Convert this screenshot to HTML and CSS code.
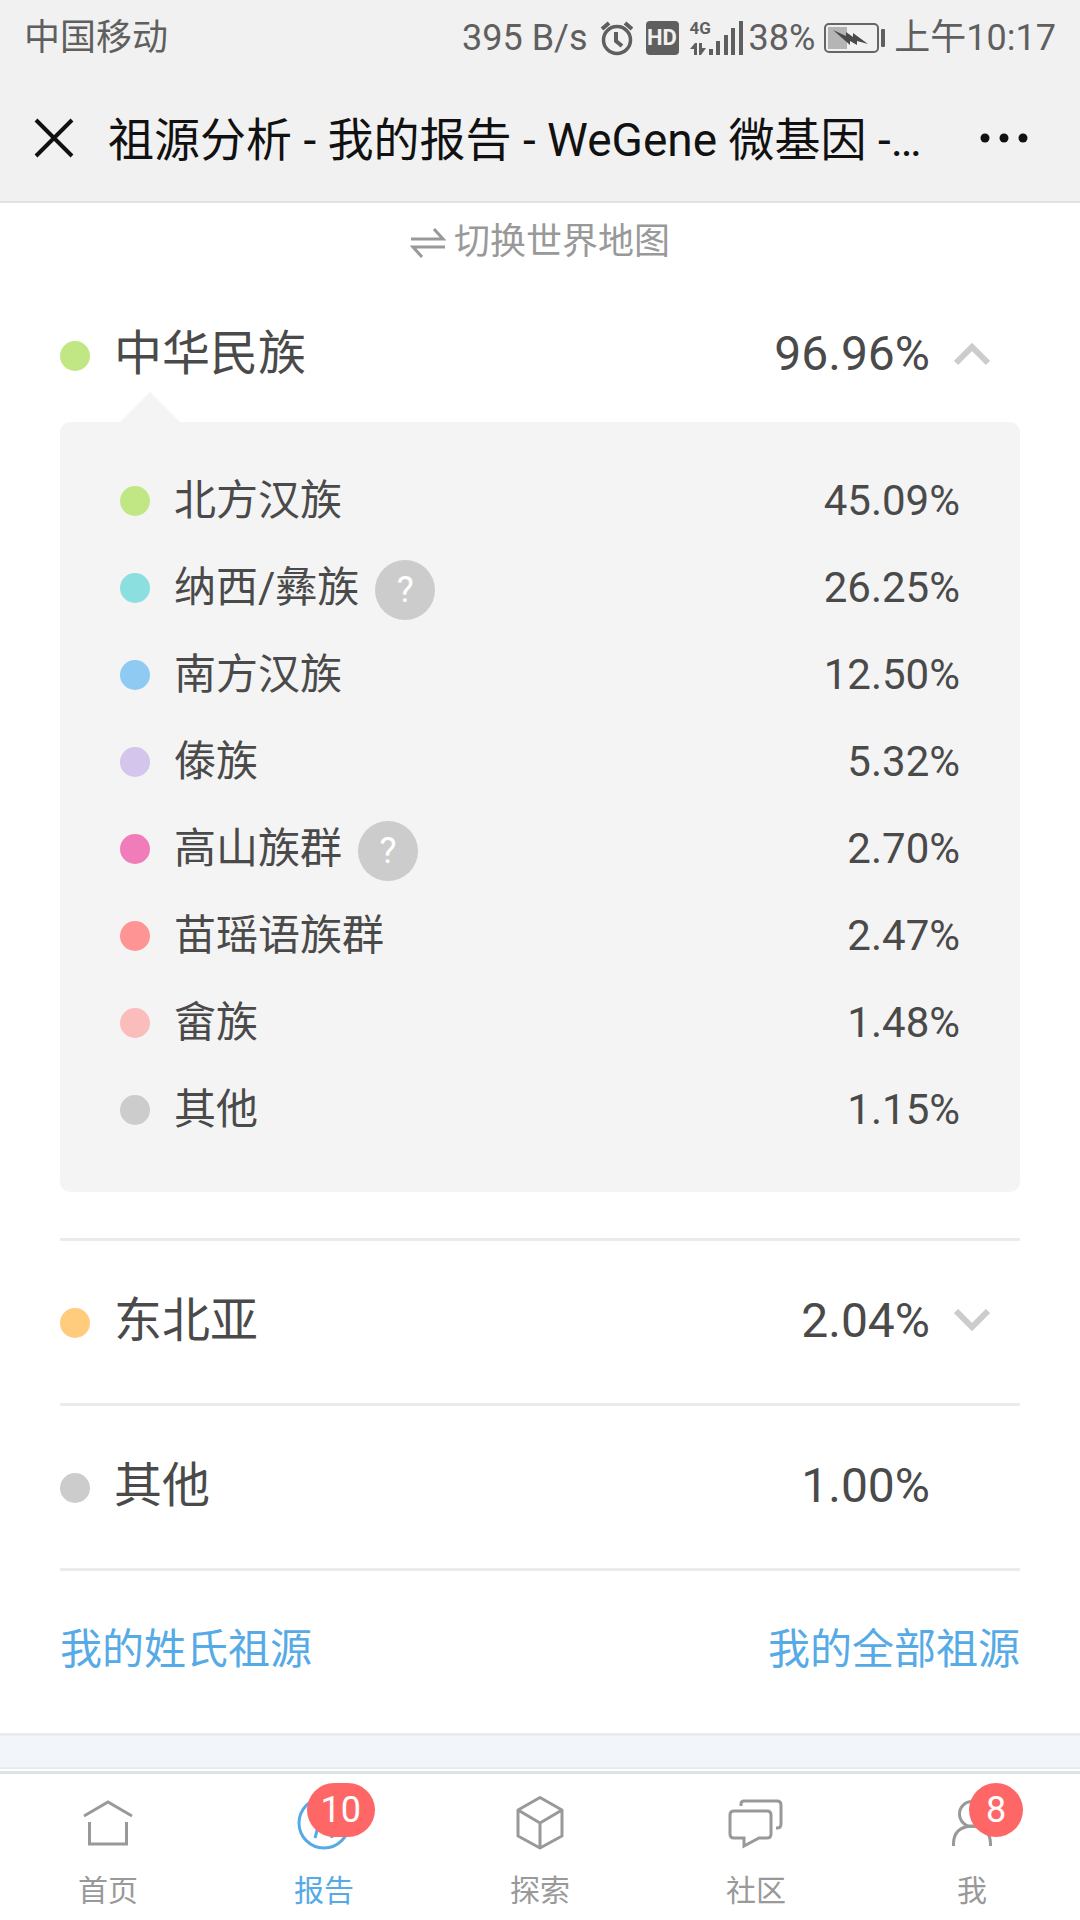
FILE: index.html
```html
<!DOCTYPE html>
<html lang="zh-CN">
<head>
    <meta charset="UTF-8">
    <meta name="viewport" content="width=device-width, initial-scale=1.0">
    <title>祖源分析 - 我的报告 - WeGene 微基因</title>
    <link rel="stylesheet" href="styles.css">
</head>
<body>
    <header class="header">
        <div class="status-bar">
            <span class="carrier">中国移动</span>
            <span class="speed">395 B/s</span>
            <svg class="icon-alarm" width="34" height="36" viewBox="0 0 34 36" fill="none" stroke="#5f5f5f">
                <circle cx="17" cy="20" r="13.5" stroke-width="3.5"/>
                <path d="M16 12v9l6 5" stroke-width="4"/>
                <path d="M2 9l7-6M32 9l-7-6" stroke-width="4"/>
            </svg>
            <span class="hd">HD</span>
            <span class="network">
                <span class="network-type">4G</span>
                <svg width="54" height="34" viewBox="0 0 54 34" fill="#5f5f5f">
                    <path d="M0 28l5-6h2v12H4v-6zM9 22h3v5h4l-5 7H9z"/>
                    <path d="M19 28h4v6h-4zM26 20h4v14h-4zM34 14h4v20h-4zM41 7h4v27h-4zM49 0h4v34h-4z"/>
                </svg>
            </span>
            <span>38%</span>
            <svg class="icon-battery" width="62" height="32" viewBox="0 0 62 32">
                <rect x="1" y="2" width="53" height="28" rx="4" fill="none" stroke="#666" stroke-width="2"/>
                <rect x="4" y="5" width="19" height="22" fill="#b5b5b5"/>
                <rect x="57" y="7" width="4" height="18" rx="1" fill="#5f5f5f"/>
                <path d="M9 8l13 6v-4l7 5v-4l15 11-11-3v4l-7-4v4z" fill="#4a4a4a"/>
            </svg>
            <span>上午10:17</span>
        </div>
        <div class="title-bar">
            <button class="icon-button" aria-label="关闭">
                <svg width="40" height="40" viewBox="0 0 40 40" fill="none" stroke="#111" stroke-width="4">
                    <path d="M2 2l36 36M38 2L2 38"/>
                </svg>
            </button>
            <h1 class="title">祖源分析 - 我的报告 - WeGene 微基因 -…</h1>
            <button class="icon-button" aria-label="更多">
                <svg width="48" height="12" viewBox="0 0 48 12" fill="#111">
                    <circle cx="5" cy="6" r="4.5"/>
                    <circle cx="24" cy="6" r="4.5"/>
                    <circle cx="43" cy="6" r="4.5"/>
                </svg>
            </button>
        </div>
    </header>

    <main class="content">
        <button class="switch-map">
            <svg width="36" height="30" viewBox="0 0 36 30" fill="none" stroke="#999" stroke-width="3">
                <path d="M1 11h32L24 1M35 19H3l9 10"/>
            </svg>
            切换世界地图
        </button>

        <section class="group">
            <button class="group-row group-row-open" aria-expanded="true">
                <span class="dot green"></span>
                <span class="name">中华民族</span>
                <span class="percent">96.96%</span>
                <svg class="chevron" width="36" height="24" viewBox="0 0 36 24" fill="none" stroke="#ccc" stroke-width="6">
                    <path d="M2 21L18 5l16 16"/>
                </svg>
            </button>
            <ul class="panel">
                <li class="item"><span class="dot green"></span>北方汉族<span class="value">45.09%</span></li>
                <li class="item"><span class="dot teal"></span>纳西/彝族<button class="help" aria-label="说明">?</button><span class="value">26.25%</span></li>
                <li class="item"><span class="dot blue"></span>南方汉族<span class="value">12.50%</span></li>
                <li class="item"><span class="dot purple"></span>傣族<span class="value">5.32%</span></li>
                <li class="item"><span class="dot pink"></span>高山族群<button class="help" aria-label="说明">?</button><span class="value">2.70%</span></li>
                <li class="item"><span class="dot red"></span>苗瑶语族群<span class="value">2.47%</span></li>
                <li class="item"><span class="dot salmon"></span>畲族<span class="value">1.48%</span></li>
                <li class="item"><span class="dot gray"></span>其他<span class="value">1.15%</span></li>
            </ul>
        </section>

        <section class="group">
            <button class="group-row" aria-expanded="false">
                <span class="dot orange"></span>
                <span class="name">东北亚</span>
                <span class="percent">2.04%</span>
                <svg class="chevron" width="36" height="24" viewBox="0 0 36 24" fill="none" stroke="#ccc" stroke-width="6">
                    <path d="M2 2l16 16L34 2"/>
                </svg>
            </button>
        </section>

        <section class="group">
            <div class="group-row">
                <span class="dot gray"></span>
                <span class="name">其他</span>
                <span class="percent">1.00%</span>
                <span class="chevron"></span>
            </div>
        </section>

        <div class="links">
            <a href="#surname">我的姓氏祖源</a>
            <a href="#all">我的全部祖源</a>
        </div>
    </main>

    <div class="divider"></div>

    <nav class="tab-bar">
        <a class="tab" href="#home">
            <svg width="56" height="56" viewBox="0 0 56 56" fill="none" stroke="#999" stroke-width="3">
                <path d="M4 21L28 7l24 14M9.5 27v22h37V27"/>
            </svg>
            首页
        </a>
        <a class="tab active" href="#report">
            <svg width="56" height="56" viewBox="0 0 56 56" fill="none" stroke="#56aae6" stroke-width="3">
                <circle cx="28" cy="28" r="25"/>
                <path d="M19 43l7-26h4l6 26"/>
            </svg>
            报告
            <span class="badge">10</span>
        </a>
        <a class="tab" href="#explore">
            <svg width="56" height="56" viewBox="0 0 56 56" fill="none" stroke="#999" stroke-width="3" stroke-linejoin="round">
                <path d="M28 2.5L50 15v26L28 53 6 41V15zM6 15l22 13 22-13M28 28v25"/>
            </svg>
            探索
        </a>
        <a class="tab" href="#community">
            <svg width="56" height="56" viewBox="0 0 56 56" fill="none" stroke="#999" stroke-width="3">
                <path d="M6 16h33q4 0 4 4v19q0 4-4 4h-8l-15 8v-8H6q-4 0-4-4V20q0-4 4-4z"/>
                <path d="M13 11V9q0-3 3-3h33q4 0 4 4v19q0 4-4 4h-1"/>
            </svg>
            社区
        </a>
        <a class="tab" href="#me">
            <svg width="56" height="56" viewBox="0 0 56 56" fill="none" stroke="#999" stroke-width="3">
                <circle cx="28" cy="19" r="12.5"/>
                <path d="M9.5 51v-2q0-17 18.5-18 18.5 1 18.5 18v2"/>
            </svg>
            我
            <span class="badge">8</span>
        </a>
    </nav>
</body>
</html>
```

FILE: styles.css
```css
* {
    box-sizing: border-box;
}
body {
    display: flex;
    flex-direction: column;
    min-height: 100vh;
    margin: 0;
    font-family: Roboto, "Noto Sans CJK SC", sans-serif;
    font-weight: 400;
    background: #fff;
    color: #4a4a4a;
}
button {
    padding: 0;
    border: none;
    background: none;
    font: inherit;
    color: inherit;
    cursor: pointer;
}
a {
    text-decoration: none;
}
svg {
    display: block;
    flex-shrink: 0;
}

/* header */
.header {
    background: #f1f1f1;
    border-bottom: 2px solid #e2e2e2;
}
.status-bar {
    display: flex;
    align-items: center;
    height: 74px;
    padding: 1px 24px 0;
    font-size: 36px;
    line-height: 44px;
    color: #5f5f5f;
}
.carrier {
    flex: 1;
}
.icon-alarm {
    margin: 0 12px;
}
.hd {
    width: 33px;
    height: 34px;
    border-radius: 4px;
    background: #5f5f5f;
    color: #f1f1f1;
    font-size: 22px;
    font-weight: 700;
    line-height: 34px;
    text-align: center;
}
.network {
    position: relative;
    margin: 0 5px 0 11px;
}
.network-type {
    position: absolute;
    top: -1px;
    left: 0;
    font-size: 17px;
    font-weight: 700;
    line-height: 16px;
}
.icon-battery {
    margin: 0 8px 0 9px;
}
.title-bar {
    display: flex;
    align-items: center;
    height: 127px;
    padding: 0 52px 0 34px;
}
.title {
    flex: 1;
    margin: 0 34px;
    padding-top: 4px;
    overflow: hidden;
    font-size: 46px;
    font-weight: 400;
    line-height: 64px;
    color: #111;
    white-space: nowrap;
    text-overflow: ellipsis;
}

/* ancestry list */
.content {
    padding: 0 60px;
}
.switch-map {
    display: flex;
    align-items: center;
    gap: 8px;
    margin: 0 auto;
    padding-top: 2px;
    font-size: 36px;
    line-height: 75px;
    color: #999;
}
.group {
    border-bottom: 3px solid #ebebeb;
}
.group-row {
    display: flex;
    align-items: center;
    width: 100%;
    height: 162px;
    padding: 0 30px 2px 0;
    font-size: 48px;
    line-height: 60px;
    text-align: left;
}
.group-row .dot {
    margin-top: 3px;
}
.group-row-open {
    height: 142px;
    padding: 6px 30px 0 0;
}
.dot {
    flex-shrink: 0;
    width: 30px;
    height: 30px;
    margin-right: 24px;
    border-radius: 50%;
}
.name {
    flex: 1;
}
.chevron {
    width: 36px;
    margin-left: 24px;
}
.panel {
    position: relative;
    margin: 0 0 46px;
    padding: 35px 60px 39px;
    border-radius: 10px;
    background: #f4f4f4;
    list-style: none;
}
.panel::before {
    content: "";
    position: absolute;
    top: -30px;
    left: 60px;
    border: 30px solid transparent;
    border-top: none;
    border-bottom-color: #f4f4f4;
}
.item {
    display: flex;
    align-items: center;
    height: 87px;
    font-size: 42px;
    line-height: 52px;
}
.value {
    margin-left: auto;
}
.help {
    width: 60px;
    height: 60px;
    margin: 5px 0 0 16px;
    border-radius: 50%;
    background: #ccc;
    color: #fff;
    font-size: 36px;
    line-height: 60px;
}
.green {
    background: #c0e783;
}
.teal {
    background: #8cdfdf;
}
.blue {
    background: #8ecaf2;
}
.purple {
    background: #d3c5ec;
}
.pink {
    background: #f07dba;
}
.red {
    background: #ff9494;
}
.salmon {
    background: #fbbcbc;
}
.gray {
    background: #ccc;
}
.orange {
    background: #ffcb7d;
}
.links {
    display: flex;
    justify-content: space-between;
    padding-bottom: 4px;
    font-size: 42px;
    line-height: 158px;
}
.links a {
    color: #56aae6;
}
.divider {
    flex: 1;
    border-top: 3px solid #e8ecee;
    border-bottom: 2px solid #e8ecee;
    background: #f2f6fa;
}

/* bottom tabs */
.tab-bar {
    display: flex;
    height: 149px;
    margin-top: 2px;
    border-top: 3px solid #dde2e4;
    background: #fff;
}
.tab {
    position: relative;
    flex: 1;
    display: flex;
    flex-direction: column;
    align-items: center;
    gap: 18px;
    padding-top: 21px;
    font-size: 30px;
    line-height: 44px;
    color: #999;
}
.active {
    color: #56aae6;
}
.badge {
    position: absolute;
    top: 9px;
    right: calc(50% - 51px);
    min-width: 54px;
    height: 54px;
    padding: 0 14px;
    border-radius: 27px;
    background: #ff6767;
    color: #fff;
    font-size: 36px;
    line-height: 54px;
    text-align: center;
}
```
